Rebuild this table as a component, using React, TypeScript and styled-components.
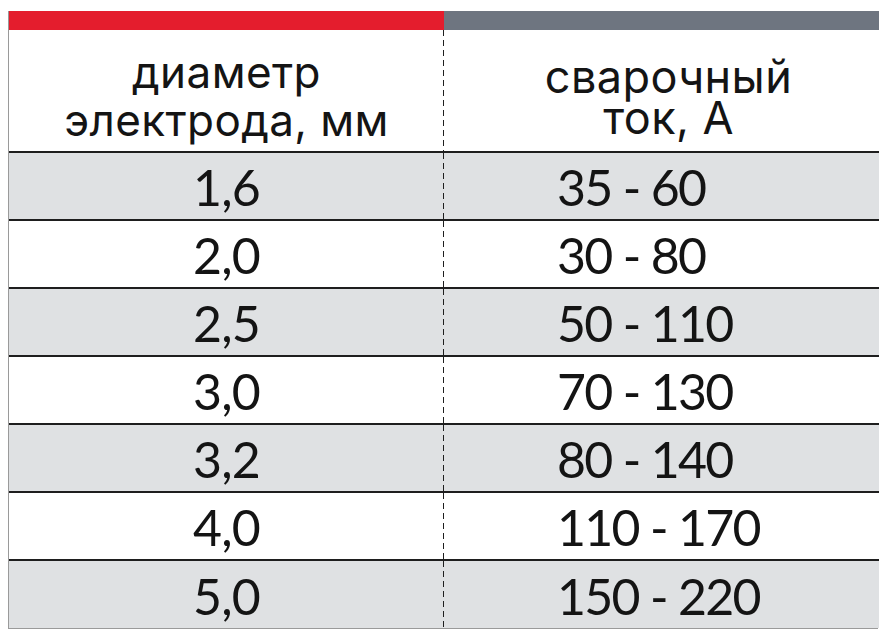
import React from 'react';
import styled, { createGlobalStyle } from 'styled-components';

const GlobalStyle = createGlobalStyle`
  html, body {
    margin: 0;
    padding: 0;
    background: #ffffff;
  }
  body {
    font-family: Lato, "Noto Sans", sans-serif;
    color: #141414;
  }
`;

const Page = styled.div`
  padding: 11px 9px 10px 8px;
`;

const Table = styled.div`
  display: grid;
  grid-template-columns: 435px 435px;
  border-left: 1px solid #9a9a9a;
  border-right: 1px solid #9a9a9a;
  border-bottom: 1px solid #9a9a9a;
  box-sizing: border-box;
  width: 870px;
`;

const Bar = styled.div<{ $color: string }>`
  height: 19px;
  background: ${p => p.$color};
`;

const dash = `
  background-image: repeating-linear-gradient(to bottom, #1e1e1e 0 6px, transparent 6px 10px);
  background-size: 1.5px 100%;
  background-position: right top;
  background-repeat: no-repeat;
`;

const HeadCell = styled.div<{ $left?: boolean }>`
  height: 123px;
  box-sizing: border-box;
  border-bottom: 2px solid #1e1e1e;
  display: flex;
  flex-direction: column;
  align-items: center;
  justify-content: center;
  font-family: Inter, "Noto Sans", sans-serif;
  font-weight: 400;
  text-align: center;
  background-color: #ffffff;
  ${p => (p.$left ? dash : '')}
  font-size: ${p => (p.$left ? '44px' : '45px')};
  padding: ${p => (p.$left ? '10px 0 0 0' : '12px 0 0 14px')};
  letter-spacing: 0.4px;
`;

const HeadLine = styled.span<{ $h: number }>`
  display: block;
  height: ${p => p.$h}px;
  line-height: ${p => p.$h}px;
  overflow: visible;
`;

const Cell = styled.div<{ $left?: boolean; $shaded?: boolean; $last?: boolean }>`
  height: ${p => (p.$last ? '67px' : '68px')};
  box-sizing: border-box;
  border-bottom: ${p => (p.$last ? 'none' : '2px solid #1e1e1e')};
  background-color: ${p => (p.$shaded ? '#dfe1e3' : '#ffffff')};
  ${p => (p.$left ? dash : '')}
  display: flex;
  align-items: center;
  justify-content: ${p => (p.$left ? 'center' : 'flex-start')};
  padding-left: ${p => (p.$left ? '0' : '113px')};
  padding-top: 2px;
  font-size: 50px;
  letter-spacing: ${p => (p.$left ? '-0.8px' : '-1.7px')};
  line-height: 1;
`;

const rows = [
  ['1,6', '35 - 60'],
  ['2,0', '30 - 80'],
  ['2,5', '50 - 110'],
  ['3,0', '70 - 130'],
  ['3,2', '80 - 140'],
  ['4,0', '110 - 170'],
  ['5,0', '150 - 220'],
];

export default function App() {
  return (
    <>
      <GlobalStyle />
      <Page>
        <Table>
          <Bar $color="#e41d2d" />
          <Bar $color="#6e7580" />
          <HeadCell $left>
            <HeadLine $h={48}>диаметр</HeadLine>
            <HeadLine $h={48}>электрода, мм</HeadLine>
          </HeadCell>
          <HeadCell>
            <HeadLine $h={41}>сварочный</HeadLine>
            <HeadLine $h={41}>ток, А</HeadLine>
          </HeadCell>
          {rows.map(([d, a], i) => (
            <React.Fragment key={d}>
              <Cell $left $shaded={i % 2 === 0} $last={i === rows.length - 1}>
                {d}
              </Cell>
              <Cell $shaded={i % 2 === 0} $last={i === rows.length - 1}>
                {a}
              </Cell>
            </React.Fragment>
          ))}
        </Table>
      </Page>
    </>
  );
}
